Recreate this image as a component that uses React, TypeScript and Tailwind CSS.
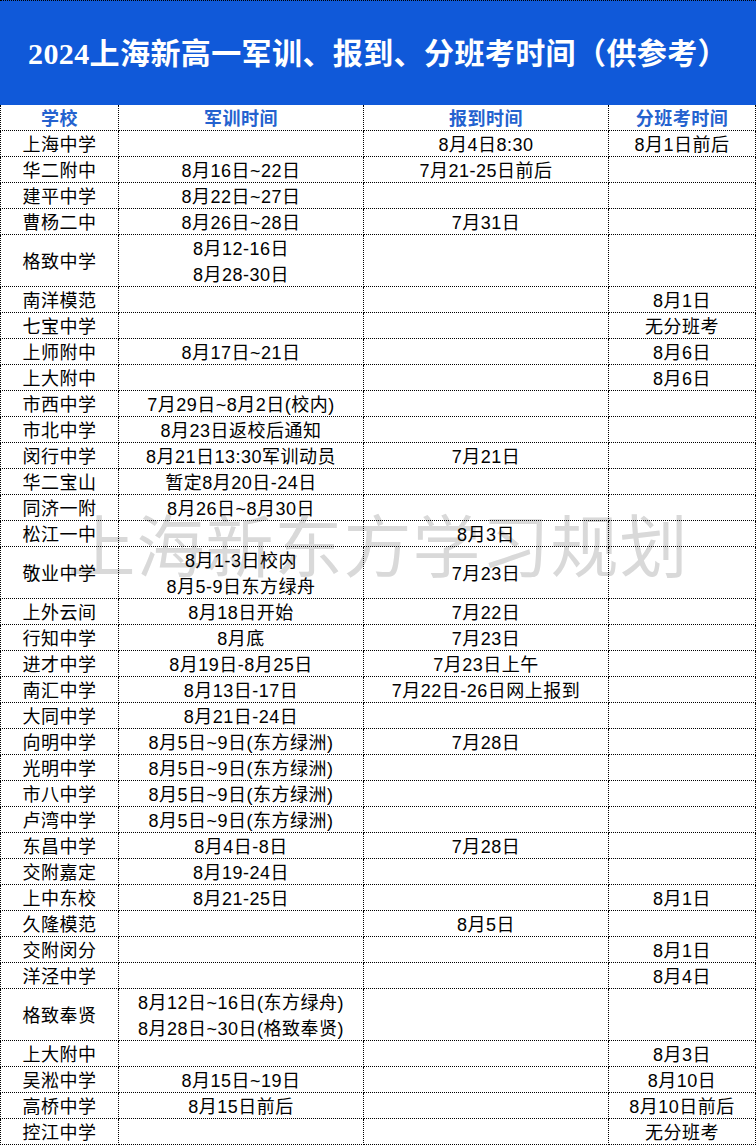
const rows: [string, string[], string, string][] = [
  ["上海中学", [""], "8月4日8:30", "8月1日前后"],
  ["华二附中", ["8月16日~22日"], "7月21-25日前后", ""],
  ["建平中学", ["8月22日~27日"], "", ""],
  ["曹杨二中", ["8月26日~28日"], "7月31日", ""],
  ["格致中学", ["8月12-16日", "8月28-30日"], "", ""],
  ["南洋模范", [""], "", "8月1日"],
  ["七宝中学", [""], "", "无分班考"],
  ["上师附中", ["8月17日~21日"], "", "8月6日"],
  ["上大附中", [""], "", "8月6日"],
  ["市西中学", ["7月29日~8月2日(校内)"], "", ""],
  ["市北中学", ["8月23日返校后通知"], "", ""],
  ["闵行中学", ["8月21日13:30军训动员"], "7月21日", ""],
  ["华二宝山", ["暂定8月20日-24日"], "", ""],
  ["同济一附", ["8月26日~8月30日"], "", ""],
  ["松江一中", [""], "8月3日", ""],
  ["敬业中学", ["8月1-3日校内", "8月5-9日东方绿舟"], "7月23日", ""],
  ["上外云间", ["8月18日开始"], "7月22日", ""],
  ["行知中学", ["8月底"], "7月23日", ""],
  ["进才中学", ["8月19日-8月25日"], "7月23日上午", ""],
  ["南汇中学", ["8月13日-17日"], "7月22日-26日网上报到", ""],
  ["大同中学", ["8月21日-24日"], "", ""],
  ["向明中学", ["8月5日~9日(东方绿洲)"], "7月28日", ""],
  ["光明中学", ["8月5日~9日(东方绿洲)"], "", ""],
  ["市八中学", ["8月5日~9日(东方绿洲)"], "", ""],
  ["卢湾中学", ["8月5日~9日(东方绿洲)"], "", ""],
  ["东昌中学", ["8月4日-8日"], "7月28日", ""],
  ["交附嘉定", ["8月19-24日"], "", ""],
  ["上中东校", ["8月21-25日"], "", "8月1日"],
  ["久隆模范", [""], "8月5日", ""],
  ["交附闵分", [""], "", "8月1日"],
  ["洋泾中学", [""], "", "8月4日"],
  ["格致奉贤", ["8月12日~16日(东方绿舟)", "8月28日~30日(格致奉贤)"], "", ""],
  ["上大附中", [""], "", "8月3日"],
  ["吴淞中学", ["8月15日~19日"], "", "8月10日"],
  ["高桥中学", ["8月15日前后"], "", "8月10日前后"],
  ["控江中学", [""], "", "无分班考"],
];

const cell =
  "flex flex-col items-center justify-center gap-[6px] pt-[3px] overflow-hidden border-r border-b border-dotted border-black";

export default function App() {
  return (
    <div
      className="relative w-[756px] bg-white text-black"
      style={{ fontFamily: '"Liberation Sans", "Noto Sans CJK SC", sans-serif' }}
    >
      {/* Title band */}
      <div className="h-[105px] bg-[#1059d9] border-t border-dotted border-black flex items-center justify-center">
        <h1
          className="text-[30px] font-bold text-white tracking-[0.4px]"
          style={{ fontFamily: '"Liberation Serif", "Noto Sans CJK SC", serif' }}
        >
          2024上海新高一军训、报到、分班考时间（供参考）
        </h1>
      </div>

      {/* Watermark */}
      <div className="pointer-events-none absolute left-0 right-0 top-[514px] flex justify-center">
        <span className="text-[68px] leading-none font-normal text-[#d9d9d9] tracking-[1px]">
          上海新东方学习规划
        </span>
      </div>

      {/* Table */}
      <div className="relative text-[18px] leading-[20px] tracking-[0.5px]">
        <div className="grid grid-cols-[119px_245px_245px_147px] h-[26px] font-bold text-[#2462cf]">
          <div className={cell + " border-l"}>学校</div>
          <div className={cell}>军训时间</div>
          <div className={cell}>报到时间</div>
          <div className={cell}>分班考时间</div>
        </div>
        {rows.map(([school, training, report, exam], i) => (
          <div
            key={i}
            className="grid grid-cols-[119px_245px_245px_147px]"
            style={{ height: training.length * 26 }}
          >
            <div className={cell + " border-l"}>{school}</div>
            <div className={cell}>
              {training.map((t, j) => (
                <div key={j}>{t}</div>
              ))}
            </div>
            <div className={cell}>{report}</div>
            <div className={cell}>{exam}</div>
          </div>
        ))}
      </div>
    </div>
  );
}
